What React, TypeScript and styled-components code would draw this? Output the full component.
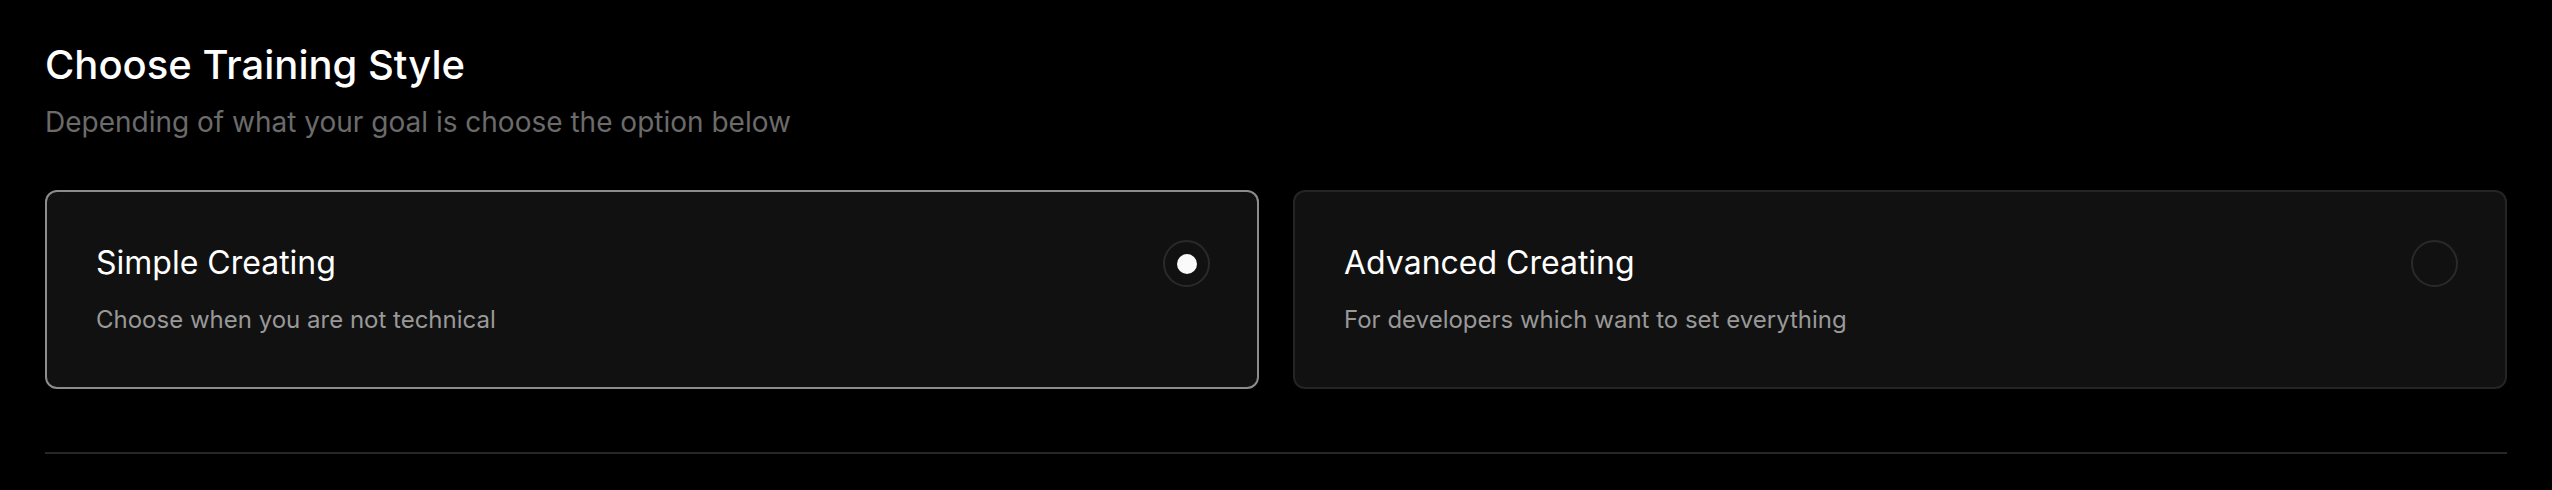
import React, { useState } from "react";
import styled, { createGlobalStyle } from "styled-components";

const GlobalStyle = createGlobalStyle`
  html, body {
    margin: 0;
    padding: 0;
    background: #000;
  }
  body {
    font-family: Inter, "Noto Sans", "Liberation Sans", sans-serif;
    color: #fff;
  }
`;

const Page = styled.div`
  padding: 41px 45px 0;
  min-height: 490px;
  box-sizing: border-box;
`;

const Header = styled.header`
  display: flex;
  flex-direction: column;
  gap: 16px;
`;

const Title = styled.h1`
  margin: 0;
  font-size: 40px;
  line-height: 48px;
  font-weight: 500;
  color: #fff;
`;

const Subtitle = styled.p`
  margin: 0;
  font-size: 28px;
  line-height: 34px;
  font-weight: 400;
  color: #6b6b6b;
`;

const Options = styled.div`
  display: grid;
  grid-template-columns: 1fr 1fr;
  gap: 34px;
  margin-top: 51px;
`;

const Card = styled.button<{ $active: boolean }>`
  display: flex;
  justify-content: space-between;
  align-items: flex-start;
  padding: 48px 47px 53px 49px;
  background: #111;
  border: 2px solid ${(p) => (p.$active ? "#8c8c8c" : "#242424")};
  border-radius: 12px;
  text-align: left;
  cursor: pointer;
  font-family: inherit;
  color: inherit;
`;

const CardText = styled.div`
  display: flex;
  flex-direction: column;
  gap: 22px;
  padding-top: 3px;
`;

const CardTitle = styled.span`
  font-size: 32px;
  line-height: 40px;
  font-weight: 400;
  color: #fff;
`;

const CardDesc = styled.span`
  font-size: 24px;
  line-height: 29px;
  color: #999;
`;

const Radio = styled.span<{ $active: boolean }>`
  width: 47px;
  height: 47px;
  box-sizing: border-box;
  border-radius: 50%;
  border: 2px solid #2a2a2a;
  display: flex;
  align-items: center;
  justify-content: center;
  flex-shrink: 0;

  &::after {
    content: "";
    width: 20px;
    height: 20px;
    border-radius: 50%;
    background: #fafafa;
    display: ${(p) => (p.$active ? "block" : "none")};
  }
`;

const Divider = styled.hr`
  margin: 63px 0 0;
  border: none;
  height: 2px;
  background: #262626;
`;

const options = [
  {
    id: "simple",
    title: "Simple Creating",
    desc: "Choose when you are not technical",
  },
  {
    id: "advanced",
    title: "Advanced Creating",
    desc: "For developers which want to set everything",
  },
];

const App: React.FC = () => {
  const [selected, setSelected] = useState("simple");
  return (
    <>
      <GlobalStyle />
      <Page>
        <Header>
          <Title>Choose Training Style</Title>
          <Subtitle>Depending of what your goal is choose the option below</Subtitle>
        </Header>
        <Options>
          {options.map((o) => (
            <Card
              key={o.id}
              $active={selected === o.id}
              onClick={() => setSelected(o.id)}
            >
              <CardText>
                <CardTitle>{o.title}</CardTitle>
                <CardDesc>{o.desc}</CardDesc>
              </CardText>
              <Radio $active={selected === o.id} />
            </Card>
          ))}
        </Options>
        <Divider />
      </Page>
    </>
  );
};

export default App;
